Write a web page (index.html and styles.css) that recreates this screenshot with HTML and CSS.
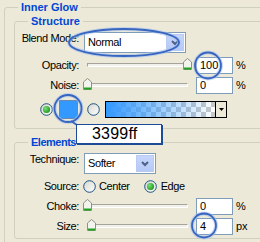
FILE: index.html
```html
<!DOCTYPE html>
<html>
<head>
<meta charset="utf-8">
<link rel="stylesheet" href="styles.css">
</head>
<body>
<svg class="defs" width="0" height="0">
  <defs>
    <linearGradient id="radioFill" x1="0" y1="0" x2="1" y2="1">
      <stop offset="0" stop-color="#d6d6cf"/>
      <stop offset="1" stop-color="#ffffff"/>
    </linearGradient>
    <radialGradient id="dotFill" cx="0.35" cy="0.35" r="0.7">
      <stop offset="0" stop-color="#7be07a"/>
      <stop offset="1" stop-color="#1e9a1c"/>
    </radialGradient>
  </defs>
</svg>

<div class="outer">
  <div class="gtitle">Inner Glow</div>

  <div class="group structure">
    <div class="gtitle">Structure</div>
    <div class="row row-select first">
      <span class="label">Blend Mode:</span>
      <div class="combo combo-blend">
        <span class="combo-text">Normal</span>
        <span class="combo-btn"><svg width="8" height="6" viewBox="0 0 8 6"><path d="M1 1 L4 4 L7 1" fill="none" stroke="#4d6185" stroke-width="2"/></svg></span>
      </div>
    </div>
    <div class="row row-slider gap2">
      <span class="label">Opacity:</span>
      <div class="slider">
        <div class="track"></div>
        <svg class="thumb" style="left:100px" width="9" height="12" viewBox="0 0 9 12"><path d="M0.5 11.5 V4 L4.5 0.5 L8.5 4 V11.5 Z" fill="#f4f4ef" stroke="#8e8f8a"/><path d="M1 10.5 H8" stroke="#21a121" stroke-width="2"/></svg>
      </div>
      <div class="num">100</div><span class="unit">%</span>
    </div>
    <div class="row row-slider">
      <span class="label">Noise:</span>
      <div class="slider">
        <div class="track"></div>
        <svg class="thumb" style="left:0px" width="9" height="12" viewBox="0 0 9 12"><path d="M0.5 11.5 V4 L4.5 0.5 L8.5 4 V11.5 Z" fill="#f4f4ef" stroke="#8e8f8a"/><path d="M1 10.5 H8" stroke="#21a121" stroke-width="2"/></svg>
      </div>
      <div class="num">0</div><span class="unit">%</span>
    </div>
    <div class="row row-color">
      <svg class="radio r-color1" width="13" height="13" viewBox="0 0 13 13"><circle cx="6.5" cy="6.5" r="5.8" fill="url(#radioFill)" stroke="#1c5180"/><circle cx="6.5" cy="6.5" r="3.6" fill="url(#dotFill)"/></svg>
      <div class="swatch"></div>
      <svg class="radio r-color2" width="13" height="13" viewBox="0 0 13 13"><circle cx="6.5" cy="6.5" r="5.8" fill="url(#radioFill)" stroke="#1c5180"/></svg>
      <div class="gradpick">
        <div class="gradbar"></div>
        <div class="gradbtn"><svg width="5" height="3" viewBox="0 0 5 3"><path d="M0 0 H5 L2.5 3 Z" fill="#000"/></svg></div>
      </div>
    </div>
  </div>

  <div class="group elements">
    <div class="gtitle gtitle-tight">Elements</div>
    <div class="row row-select first">
      <span class="label">Technique:</span>
      <div class="combo combo-tech">
        <span class="combo-text">Softer</span>
        <span class="combo-btn"><svg width="8" height="6" viewBox="0 0 8 6"><path d="M1 1 L4 4 L7 1" fill="none" stroke="#4d6185" stroke-width="2"/></svg></span>
      </div>
    </div>
    <div class="row row-source gap2">
      <span class="label">Source:</span>
      <svg class="radio r-center" width="13" height="13" viewBox="0 0 13 13"><circle cx="6.5" cy="6.5" r="5.8" fill="url(#radioFill)" stroke="#1c5180"/></svg>
      <span class="opt opt-center">Center</span>
      <svg class="radio r-edge" width="13" height="13" viewBox="0 0 13 13"><circle cx="6.5" cy="6.5" r="5.8" fill="url(#radioFill)" stroke="#1c5180"/><circle cx="6.5" cy="6.5" r="3.6" fill="url(#dotFill)"/></svg>
      <span class="opt opt-edge">Edge</span>
    </div>
    <div class="row row-slider">
      <span class="label">Choke:</span>
      <div class="slider">
        <div class="track"></div>
        <svg class="thumb" style="left:0px" width="9" height="12" viewBox="0 0 9 12"><path d="M0.5 11.5 V4 L4.5 0.5 L8.5 4 V11.5 Z" fill="#f4f4ef" stroke="#8e8f8a"/><path d="M1 10.5 H8" stroke="#21a121" stroke-width="2"/></svg>
      </div>
      <div class="num">0</div><span class="unit">%</span>
    </div>
    <div class="row row-slider">
      <span class="label">Size:</span>
      <div class="slider">
        <div class="track"></div>
        <svg class="thumb" style="left:4px" width="9" height="12" viewBox="0 0 9 12"><path d="M0.5 11.5 V4 L4.5 0.5 L8.5 4 V11.5 Z" fill="#f4f4ef" stroke="#8e8f8a"/><path d="M1 10.5 H8" stroke="#21a121" stroke-width="2"/></svg>
      </div>
      <div class="num">4</div><span class="unit">px</span>
    </div>
  </div>
</div>

<svg class="annot" width="260" height="242" viewBox="0 0 260 242">
  <g fill="none">
    <ellipse cx="124" cy="42.5" rx="55" ry="13.5" stroke="#a9c0ec" stroke-width="4" opacity="0.6"/>
    <ellipse cx="124" cy="42.5" rx="55" ry="13.5" stroke="#3766c0" stroke-width="1.8"/>
    <circle cx="208" cy="65.5" r="13" stroke="#a9c0ec" stroke-width="4" opacity="0.6"/>
    <circle cx="208" cy="65.5" r="13" stroke="#3766c0" stroke-width="1.8"/>
    <circle cx="68" cy="108.5" r="13.5" stroke="#a9c0ec" stroke-width="4" opacity="0.6"/>
    <circle cx="68" cy="108.5" r="13.5" stroke="#3766c0" stroke-width="1.8"/>
    <line x1="71" y1="121" x2="77" y2="125" stroke="#3766c0" stroke-width="1.8"/>
    <circle cx="204" cy="225.5" r="12" stroke="#a9c0ec" stroke-width="4" opacity="0.6"/>
    <circle cx="204" cy="225.5" r="12" stroke="#3766c0" stroke-width="1.8"/>
  </g>
</svg>
<div class="tip">3399ff</div>
</body>
</html>
```

FILE: styles.css
```css
* { box-sizing: border-box; }
html, body { margin: 0; padding: 0; }
body {
  width: 260px;
  height: 242px;
  overflow: hidden;
  position: relative;
  background: #ece9d8;
  font-family: "Liberation Sans", Arial, sans-serif;
  font-size: 11px;
  line-height: 13px;
  color: #000;
  letter-spacing: -0.4px;
}
.defs { position: absolute; width: 0; height: 0; }

.outer {
  margin: 7px 0 0 4px;
  width: 300px;
  height: 270px;
  border: 1px solid #d0d0bf;
  border-radius: 3px;
}
.gtitle {
  display: block;
  width: max-content;
  margin: -7px 0 0 13px;
  height: 13px;
  line-height: 13px;
  padding: 0 3px;
  background: #ece9d8;
  color: #0046d5;
  font-weight: bold;
  letter-spacing: 0;
}
.gtitle-tight { letter-spacing: -0.5px; }
.group {
  margin: 7px 0 0 9px;
  width: 300px;
  border: 1px solid #d0d0bf;
  border-radius: 3px;
  padding-bottom: 8px;
}
.elements { margin-top: 13px; padding-bottom: 2px; }

.row { display: flex; align-items: center; height: 20px; }
.row.first { margin-top: 4px; }
.row.gap2 { margin-top: 2px; }
.label { width: 64px; flex: none; text-align: right; }

.row-select { height: 21px; align-items: flex-start; }
.combo {
  margin-left: 5px;
  height: 21px;
  border: 1px solid #7f9db9;
  background: #fff;
  display: flex;
  align-items: center;
  justify-content: space-between;
}
.combo-blend { width: 102px; }
.combo-tech { width: 72px; }
.combo-text { padding-left: 3px; }
.combo-btn {
  width: 18px;
  height: 17px;
  margin-right: 1px;
  background: linear-gradient(#c6d6fc, #b5c9f7);
  border: 1px solid #b9cbf3;
  display: flex;
  align-items: center;
  justify-content: center;
}

.slider {
  position: relative;
  width: 106px;
  height: 20px;
  margin-left: 4px;
  flex: none;
}
.track {
  margin: 8px 0 0 4px;
  width: 101px;
  height: 4px;
  border-top: 1px solid #a4a49c;
  border-left: 1px solid #a4a49c;
  border-bottom: 1px solid #fff;
  border-right: 1px solid #fff;
  background: #f1f0ea;
}
.thumb { position: absolute; top: 3px; }
.num {
  margin-left: 7px;
  width: 37px;
  height: 17px;
  border: 1px solid #7f9db9;
  background: #fff;
  padding-left: 3px;
  line-height: 15px;
  letter-spacing: 0;
  flex: none;
}
.unit { margin-left: 3px; letter-spacing: 0; }

.row-color { height: 22px; margin-top: 3px; }
.radio { flex: none; display: block; }
.r-color1 { margin-left: 25px; }
.swatch {
  margin-left: 6px;
  width: 19px;
  height: 19px;
  background: #3399ff;
  border: 1px solid #6a87ae;
  flex: none;
}
.r-color2 { margin-left: 9px; }
.gradpick {
  margin-left: 5px;
  width: 122px;
  height: 17px;
  border: 1px solid #000;
  display: flex;
  flex: none;
}
.gradbar {
  flex: 1;
  background:
    linear-gradient(to right, #3399ff 0%, rgba(51,153,255,0.75) 25%, rgba(51,153,255,0) 100%),
    conic-gradient(#c8c8c8 25%, #ffffff 0 50%, #c8c8c8 0 75%, #ffffff 0) 0 0 / 10px 10px;
}
.gradbtn {
  width: 11px;
  border-left: 1px solid #000;
  background: #ece9d8;
  display: flex;
  align-items: center;
  justify-content: center;
}

.r-center { margin-left: 4px; }
.opt-center { margin-left: 3px; }
.r-edge { margin-left: 14px; }
.opt-edge { margin-left: 4px; }

.annot { position: absolute; left: 0; top: 0; pointer-events: none; }
.tip {
  position: absolute;
  left: 76px;
  top: 124px;
  width: 86px;
  height: 20px;
  background: #fff;
  border: 1px solid #1d4c97;
  box-shadow: 1px 1px 0 #1d4c97;
  font-size: 16px;
  line-height: 18px;
  padding-left: 15px;
  letter-spacing: 0.2px;
}
```
